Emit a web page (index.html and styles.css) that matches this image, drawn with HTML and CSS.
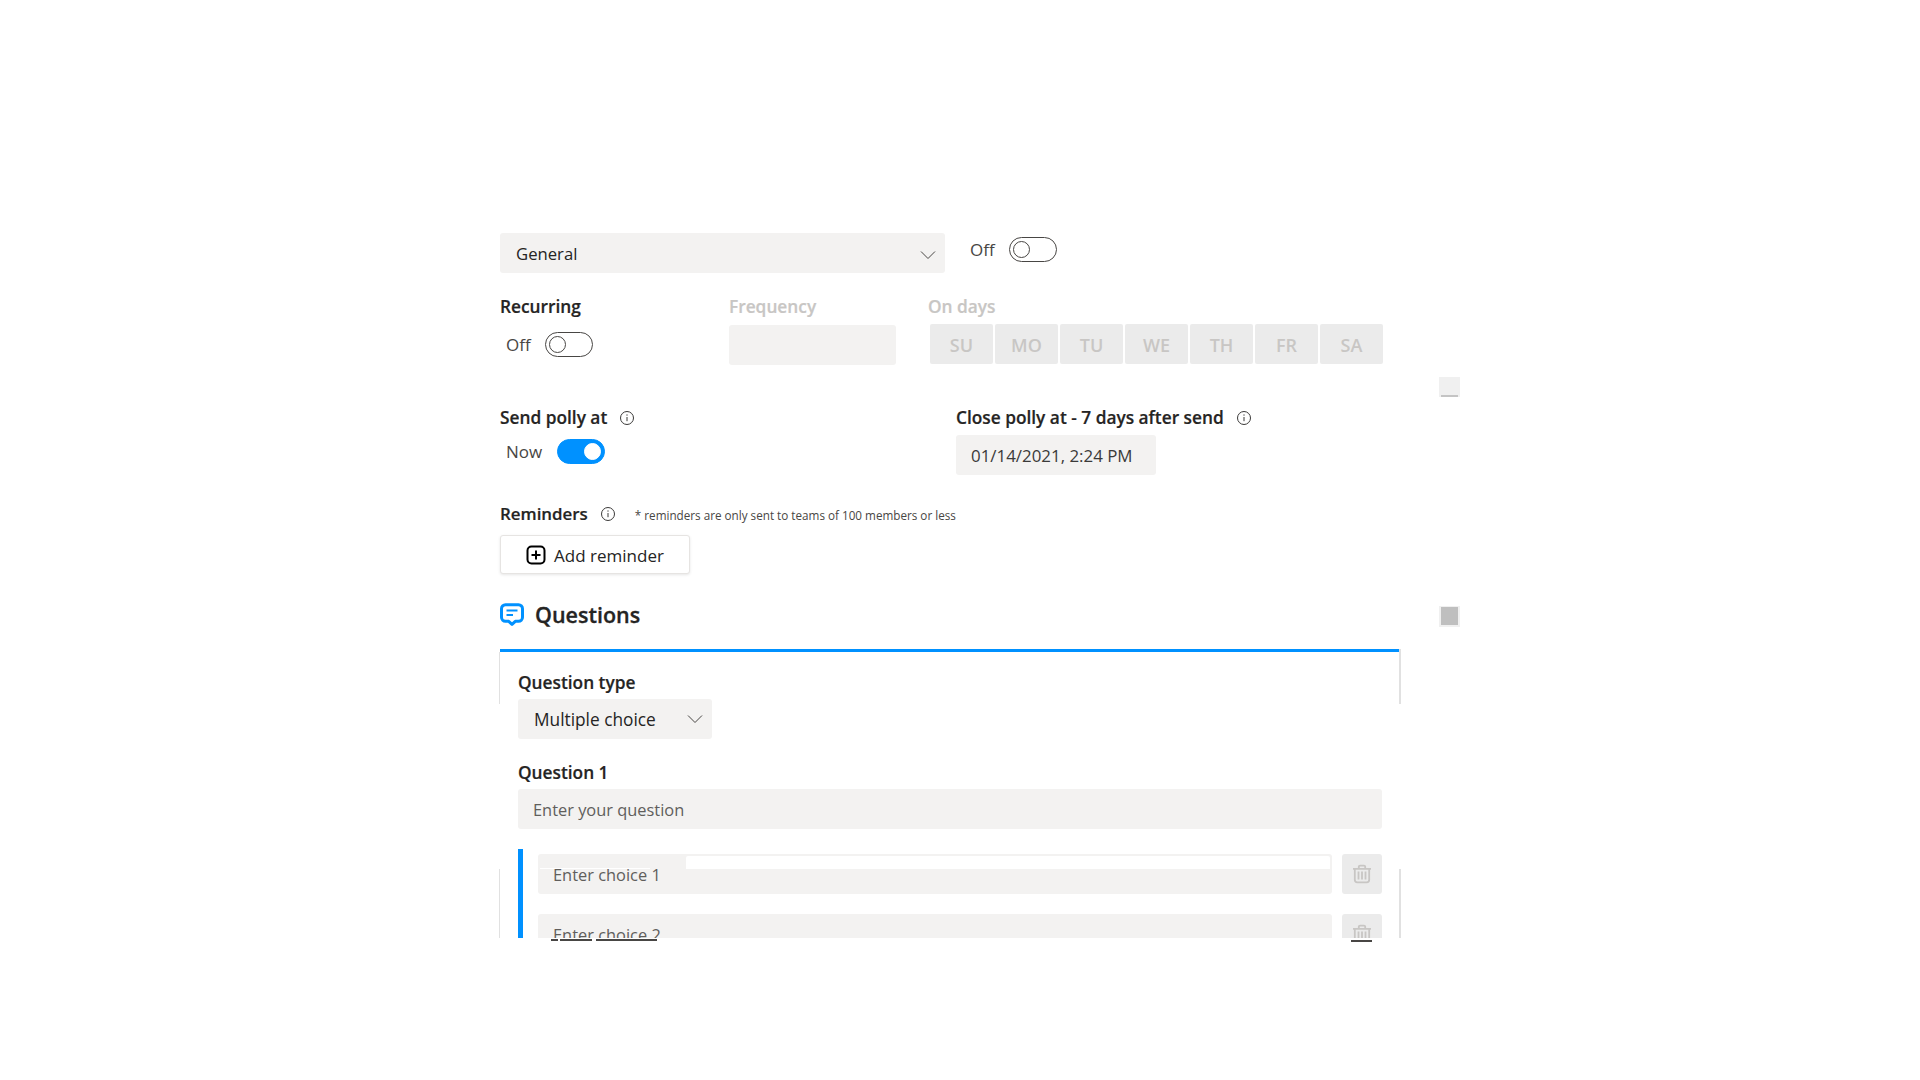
FILE: index.html
```html
<!DOCTYPE html>
<html lang="en">
<head>
<meta charset="utf-8">
<title>Polly</title>
<link rel="stylesheet" href="styles.css">
</head>
<body>
<main class="form">
  <div class="row-channel">
    <div class="select select-channel"><span class="txt-general">General</span>
      <svg class="chev" viewBox="0 0 16 10"><path d="M1 1.5l7 7 7-7"/></svg>
    </div>
    <div class="switch switch-channel"><span class="switch-text">Off</span><span class="toggle"><i></i></span></div>
  </div>

  <div class="row-recurring">
    <div class="col-recurring">
      <div class="label">Recurring</div>
      <div class="switch switch-recurring"><span class="switch-text">Off</span><span class="toggle"><i></i></span></div>
    </div>
    <div class="col-frequency">
      <div class="label disabled">Frequency</div>
      <div class="field field-frequency"></div>
    </div>
    <div class="col-days">
      <div class="label disabled">On days</div>
      <div class="days">
        <span>SU</span><span>MO</span><span>TU</span><span>WE</span><span>TH</span><span>FR</span><span>SA</span>
      </div>
    </div>
  </div>

  <div class="row-send">
    <div class="col-send">
      <div class="label label-info">Send polly at
        <svg class="info" viewBox="0 0 16 16"><circle cx="8" cy="8" r="6.5"/><path d="M8 7v4.2M8 4.4v1.3"/></svg>
      </div>
      <div class="switch switch-now"><span class="switch-text">Now</span><span class="toggle on"><i></i></span></div>
    </div>
    <div class="col-close">
      <div class="label label-info">Close polly at - 7 days after send
        <svg class="info" viewBox="0 0 16 16"><circle cx="8" cy="8" r="6.5"/><path d="M8 7v4.2M8 4.4v1.3"/></svg>
      </div>
      <div class="field field-date">01/14/2021, 2:24 PM</div>
    </div>
  </div>

  <div class="row-reminders">
    <div class="label label-info label-reminders">Reminders
      <svg class="info" viewBox="0 0 16 16"><circle cx="8" cy="8" r="6.5"/><path d="M8 7v4.2M8 4.4v1.3"/></svg>
    </div>
    <span class="note">* reminders are only sent to teams of 100 members or less</span>
  </div>
  <button class="add-btn" type="button">
    <svg class="plus" viewBox="0 0 20 20"><rect x="1.5" y="1.5" width="17" height="17" rx="4"/><path d="M10 5.5v9M5.5 10h9"/></svg>
    <span class="add-text">Add reminder</span>
  </button>

  <h2 class="heading">
    <svg class="chat" viewBox="0 0 24 24"><path class="chat-body" d="M5.5 1.7h13a4 4 0 0 1 4 4v8.600a4 4 0 0 1-4 4h-3.200L12 21.400l-3.300-3.100H5.500a4 4 0 0 1-4-4V5.700a4 4 0 0 1 4-4z"/><path class="chat-lines" d="M6.500 7.500h11M6.500 12h6.500"/></svg>
    <span class="heading-text">Questions</span>
  </h2>

  <div class="card-frame">
    <span class="edge edge-left-top"></span>
    <span class="edge edge-right-top"></span>
    <span class="edge edge-left-bottom"></span>
    <span class="edge edge-right-bottom"></span>
    <section class="card">
      <div class="label">Question type</div>
      <div class="select select-type"><span class="txt-type">Multiple choice</span>
        <svg class="chev" viewBox="0 0 16 10"><path d="M1 1.500l7 7 7-7"/></svg>
      </div>
      <div class="label label-q">Question 1</div>
      <div class="field field-question">Enter your question</div>
      <div class="choices">
        <div class="choice">
          <div class="field field-choice first">Enter choice 1</div>
          <div class="trash">
            <svg viewBox="0 0 20 20"><path d="M6.800 4V2.800a1.200 1.200 0 0 1 1.200-1.200h4a1.200 1.200 0 0 1 1.200 1.200V4M1 4.800h18M2.800 5.200v10.600a2.500 2.500 0 0 0 2.500 2.500h9.400a2.500 2.500 0 0 0 2.500-2.500V5.200M6.500 7.500v8M10 7.500v8M13.500 7.500v8"/></svg>
          </div>
        </div>
        <div class="choice">
          <div class="field field-choice">Enter choice 2</div>
          <div class="trash">
            <svg viewBox="0 0 20 20"><path d="M6.800 4V2.800a1.200 1.200 0 0 1 1.200-1.200h4a1.200 1.200 0 0 1 1.200 1.200V4M1 4.800h18M2.800 5.200v10.600a2.500 2.500 0 0 0 2.500 2.500h9.400a2.500 2.500 0 0 0 2.500-2.500V5.200M6.500 7.500v8M10 7.500v8M13.500 7.500v8"/></svg>
          </div>
        </div>
      </div>
    </section>
    <span class="dash dash-a"></span>
    <span class="dash dash-b"></span>
    <span class="dash dash-c"></span>
    <span class="dash dash-trash"></span>
  </div>
</main>
<span class="thumb thumb-light"></span>
<span class="thumb thumb-dark"></span>
</body>
</html>
```
FILE: styles.css
```css
* { box-sizing: border-box; }
html, body { margin: 0; height: 100%; background: #fff; }
body {
  position: relative;
  height: 1080px;
  overflow: hidden;
  font-family: "Open Sans", "Noto Sans", sans-serif;
  font-size: 17px;
  color: #252423;
}
.form { width: 900px; margin-left: 500px; padding-top: 233px; }

.label { font-size: 17.3px; font-weight: 600; height: 22px; line-height: 22px; color: #252423; white-space: nowrap; -webkit-text-stroke: 0.2px currentColor; }
.label.disabled { color: #c8c6c4; }
.label-info { display: flex; align-items: center; }
.label-reminders { font-size: 16.900px; }
.info { width: 16px; height: 16px; margin-left: 12px; fill: none; stroke: #3b3a39; stroke-width: 1; }

.select, .field { background: #f3f2f1; border-radius: 3px; height: 40px; display: flex; align-items: center; white-space: nowrap; }
.chev { width: 16px; height: 10px; fill: none; stroke: #484644; stroke-width: 1; }
.txt-general { font-size: 16.700px; padding-top: 1px; }
.txt-type { font-size: 17.300px; padding-top: 1px; }

.row-channel { display: flex; }
.select-channel { width: 445px; padding: 0 9px 0 16px; justify-content: space-between; }
.select-channel .chev { margin-top: 3px; }
.switch { display: flex; align-items: center; }
.switch-text { color: #484644; }
.toggle { width: 48px; height: 25px; border: 1px solid #484644; border-radius: 13px; padding: 3px; display: block; }
.toggle i { display: block; width: 17px; height: 17px; border: 1px solid #484644; border-radius: 50%; }
.toggle.on { background: #0091ff; border-color: #0091ff; padding: 3px 3px 3px 26px; }
.toggle.on i { background: #fff; border-color: #fff; }
.switch-channel { margin: 4px 0 0 25px; height: 25px; gap: 14px; }

.row-recurring { display: flex; margin-top: 22px; }
.row-recurring .label { line-height: 24px; }
.col-recurring { width: 229px; }
.col-frequency { width: 199px; }
.switch-recurring { margin: 15px 0 0 6px; gap: 14px; }
.field-frequency { width: 167px; margin-top: 8px; }
.days { display: flex; gap: 2px; margin: 7px 0 0 2px; }
.days span {
  width: 63px; height: 40px; background: #ebebeb; border-radius: 2px;
  display: flex; align-items: center; justify-content: center;
  color: #c8c6c4; font-weight: 600; font-size: 18px; padding-top: 1px;
}

.row-send { display: flex; margin-top: 42px; }
.col-send { width: 456px; }
.switch-now { margin: 10px 0 0 6px; gap: 15px; }
.field-date { width: 200px; margin-top: 6px; padding-left: 15px; color: #3b3a39; font-size: 16.900px; }

.row-reminders { display: flex; align-items: center; margin-top: 28px; height: 22px; }
.note { font-size: 11.700px; color: #484644; margin-left: 19px; margin-top: 2px; }

.add-btn {
  display: flex; align-items: center; justify-content: center; gap: 8px;
  width: 190px; height: 39px; margin-top: 10px;
  background: #fff; border: 1px solid #e6e4e2; border-radius: 3px;
  box-shadow: 0 1px 3px rgba(0,0,0,.1);
  font: inherit; color: #252423; padding: 0;
}
.add-text { padding-top: 2px; }
.plus { width: 20px; height: 20px; fill: none; stroke: #000; stroke-width: 2; }

.heading {
  display: flex; align-items: center; gap: 11px; margin: 19px 0 0;
  height: 44px; font-size: 21.500px; font-weight: 600; color: #252423;
  -webkit-text-stroke: 0.3px currentColor;
}
.heading-text { margin-top: -2px; }
.chat { width: 24px; height: 24px; flex: none; }
.chat-body { fill: none; stroke: #0091ff; stroke-width: 3; stroke-linejoin: round; }
.chat-lines { fill: none; stroke: #0091ff; stroke-width: 2; }

.card-frame { position: relative; margin-top: 12px; width: 899px; height: 289px; }
.card { height: 289px; overflow: hidden; border-top: 3px solid #0091ff; padding: 20px 17px 0 18px; }
.select-type { width: 194px; margin-top: 5px; padding: 0 9px 0 16px; justify-content: space-between; }
.label-q { margin-top: 23px; }
.field-question { margin-top: 5px; padding-left: 15px; padding-top: 1px; color: #605e5c; font-size: 16.400px; }
.choices { margin-top: 20px; border-left: 5px solid #0091ff; padding: 5px 0 60px 15px; }
.choice { display: flex; gap: 10px; margin-bottom: 20px; }
.field-choice { flex: 1; padding-left: 15px; padding-top: 1px; color: #605e5c; font-size: 16.400px; }
.field-choice.first { position: relative; }
.field-choice.first::before {
  content: ""; position: absolute; left: 148px; right: 2px; top: 2px; height: 13px;
  background: #fff; border-radius: 2px 2px 0 0;
}
.field-choice.first::after {
  content: ""; position: absolute; left: 2px; width: 110px; top: 14px; height: 1px; background: #fff;
}
.trash { width: 40px; height: 40px; background: #ebebeb; border-radius: 3px; display: flex; align-items: center; justify-content: center; flex: none; }
.trash svg { width: 20px; height: 20px; fill: none; stroke: #c8c6c4; stroke-width: 1.800; }

.edge { position: absolute; width: 1px; background: #e1e1e1; }
.edge-left-top { left: -1px; top: 3px; height: 52px; }
.edge-right-top { right: -2px; top: 0; height: 55px; width: 2px; }
.edge-left-bottom { left: -1px; top: 220px; height: 69px; }
.edge-right-bottom { right: -2px; top: 220px; height: 69px; width: 2px; }

.dash { position: absolute; top: 290px; height: 2px; background: #484644; }
.dash-a { left: 51px; width: 7px; }
.dash-b { left: 60px; width: 32px; }
.dash-c { left: 96px; width: 61px; }
.dash-trash { left: 851px; width: 21px; top: 291px; }

.thumb { position: absolute; left: 1439px; width: 21px; height: 20px; }
.thumb-light { top: 377px; background: #f0f0f0; }
.thumb-light::after { content: ""; position: absolute; left: 2px; right: 2px; bottom: 0; height: 2px; background: #c4c4c4; }
.thumb-dark { top: 606px; height: 21px; background: #bfbfbf; border: 2px solid #f0f0f0; border-top-width: 1px; }
```
